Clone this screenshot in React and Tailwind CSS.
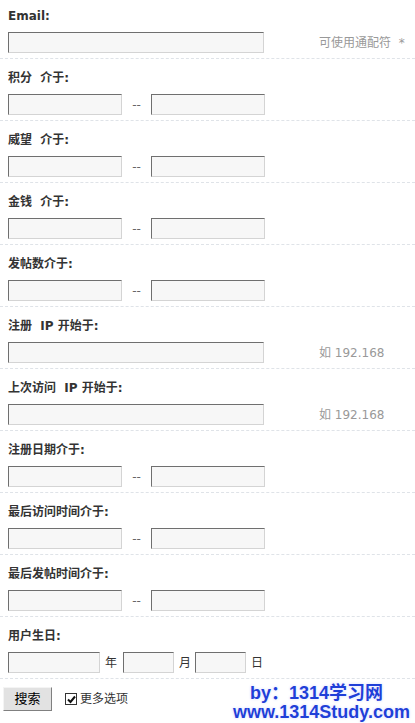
import React from "react";

const font = { fontFamily: '"DejaVu Sans", "Noto Sans CJK SC", sans-serif' };

const inputCls =
  "h-[21px] bg-[#f7f7f7] border border-t-[#6f6f6f] border-l-[#6f6f6f] border-b-[#d4d4d4] border-r-[#d4d4d4] outline-none";

const Row = ({ label, first, children }) => (
  <div
    className={`${first ? "pt-[7px]" : "pt-[10px]"} pb-[5px] border-b border-dashed border-[#dfe3e8]`}
  >
    <div className="text-[12px] leading-[18px] font-bold text-[#333] pl-[8px] whitespace-pre">
      {label}
    </div>
    <div className="mt-[7px] pl-[8px] flex items-center">{children}</div>
  </div>
);

const Range = () => (
  <>
    <input className={`${inputCls} w-[114px]`} />
    <span className="w-[29px] text-center text-[12px] text-[#666]">--</span>
    <input className={`${inputCls} w-[114px]`} />
  </>
);

const Wide = ({ hint }) => (
  <>
    <input className={`${inputCls} w-[256px]`} />
    <span className="ml-[55px] text-[12px] text-[#999] whitespace-pre">{hint}</span>
  </>
);

export default function App() {
  return (
    <div className="relative w-[415px] h-[723px] bg-white overflow-hidden" style={font}>
      <Row label="Email:" first>
        <Wide hint="可使用通配符  *" />
      </Row>
      <Row label="积分  介于:">
        <Range />
      </Row>
      <Row label="威望  介于:">
        <Range />
      </Row>
      <Row label="金钱  介于:">
        <Range />
      </Row>
      <Row label="发帖数介于:">
        <Range />
      </Row>
      <Row label="注册  IP 开始于:">
        <Wide hint="如 192.168" />
      </Row>
      <Row label="上次访问  IP 开始于:">
        <Wide hint="如 192.168" />
      </Row>
      <Row label="注册日期介于:">
        <Range />
      </Row>
      <Row label="最后访问时间介于:">
        <Range />
      </Row>
      <Row label="最后发帖时间介于:">
        <Range />
      </Row>
      <Row label="用户生日:">
        <input className={`${inputCls} w-[92px]`} />
        <span className="w-[23px] pl-[5px] text-[12px] text-[#333]">年</span>
        <input className={`${inputCls} w-[51px]`} />
        <span className="w-[21px] pl-[5px] text-[12px] text-[#333]">月</span>
        <input className={`${inputCls} w-[51px]`} />
        <span className="pl-[5px] text-[12px] text-[#333]">日</span>
      </Row>

      <div className="flex items-center pt-[8px] pl-[3px]">
        <button className="w-[49px] h-[24px] bg-[#e2e2e2] border border-t-[#f4f4f4] border-l-[#f4f4f4] border-b-[#808080] border-r-[#808080] text-[13px] text-black">
          搜索
        </button>
        <label className="ml-[13px] flex items-center text-[12px] text-[#333]">
          <span className="w-[12px] h-[12px] border border-[#333] bg-white flex items-center justify-center">
            <svg width="9" height="9" viewBox="0 0 9 9">
              <path d="M1 4.5 L3.5 7 L8 1.5" stroke="#111" strokeWidth="2" fill="none" />
            </svg>
          </span>
          <span className="ml-[3px]">更多选项</span>
        </label>
      </div>

      <div
        className="absolute right-[5px] bottom-[1px] text-right font-bold text-[#1f3fd8] leading-[19px]"
        style={{
          fontFamily: '"Liberation Sans", "Noto Sans CJK SC", sans-serif',
          textShadow: "0 0 2px #fff, 0 0 3px #c8d0ff",
        }}
      >
        <div className="text-[18px] pr-[27px]">by：1314学习网</div>
        <div className="text-[18px]">www.1314Study.com</div>
      </div>
    </div>
  );
}
